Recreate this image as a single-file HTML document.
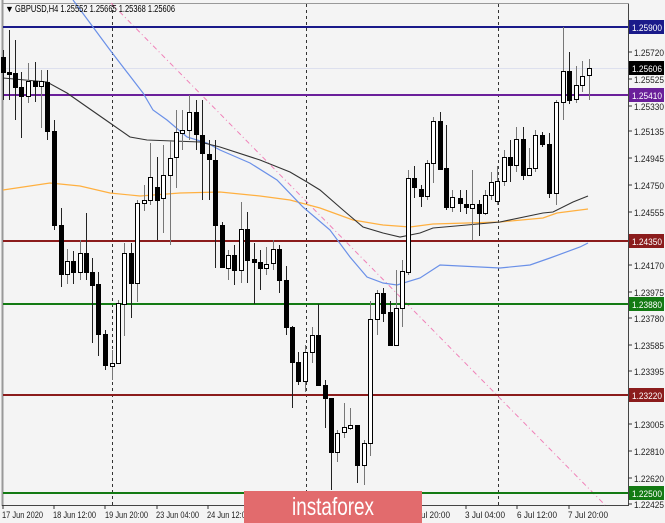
<!DOCTYPE html>
<html><head><meta charset="utf-8"><style>
html,body{margin:0;padding:0;background:#f4f4f4;}
svg{display:block;font-family:"Liberation Sans","DejaVu Sans",sans-serif;}
</style></head><body>
<svg id="s" width="665" height="523" viewBox="0 0 665 523" xmlns="http://www.w3.org/2000/svg">
<rect width="665" height="523" fill="#f4f4f4"/>
<line x1="2.5" y1="0" x2="2.5" y2="506" stroke="#999" stroke-width="2"/>
<line x1="628.5" y1="3" x2="628.5" y2="506" stroke="#444"/>
<line x1="2" y1="505.5" x2="629" y2="505.5" stroke="#444"/>
<line x1="2" y1="3.5" x2="629" y2="3.5" stroke="#999"/>
<g stroke="#333" stroke-dasharray="3,3">
<line x1="112.5" y1="4" x2="112.5" y2="505"/>
<line x1="306.5" y1="4" x2="306.5" y2="505"/>
<line x1="498.5" y1="4" x2="498.5" y2="505"/>
</g>
<line x1="3" y1="68.5" x2="628" y2="68.5" stroke="#dde0ee"/>
<line x1="111" y1="3" x2="605" y2="505" stroke="#f080b8" stroke-dasharray="5,3,1,3"/>
<line x1="3" y1="27" x2="628" y2="27" stroke="#1a1a8a" stroke-width="2"/>
<line x1="3" y1="95" x2="628" y2="95" stroke="#6a1f9a" stroke-width="2"/>
<line x1="3" y1="241" x2="628" y2="241" stroke="#8b1c1c" stroke-width="2"/>
<line x1="3" y1="304" x2="628" y2="304" stroke="#137a13" stroke-width="2"/>
<line x1="3" y1="395" x2="628" y2="395" stroke="#8b1c1c" stroke-width="2"/>
<line x1="3" y1="493" x2="628" y2="493" stroke="#137a13" stroke-width="2"/>
<polyline fill="none" stroke="#ffb040" stroke-width="1.2" points="3,190 50,183 80,186 110,193 140,196 180,193 220,192 260,196 290,200 320,208 353,220 383,225 410,227 433,224 467,223 500,222 543,218 557,213 588,209"/>
<polyline fill="none" stroke="#6a90e8" stroke-width="1.2" points="73,0 110,50 143,93 153,110 167,120 187,137 207,143 220,150 250,163 277,180 303,207 330,230 350,257 367,277 383,283 397,285 420,278 440,265 500,268 530,265 550,258 580,247 588,243"/>
<polyline fill="none" stroke="#333" stroke-width="1.1" points="3,78 47,82 67,93 87,107 110,123 130,137 147,140 173,141 200,142 220,147 260,160 290,172 307,182 320,190 343,210 363,227 383,233 400,237 420,233 433,228 467,225 500,222 543,213 553,212 573,202 588,196"/>
<g id="c"></g>
<text x="5" y="12" font-size="9" fill="#000">▼</text>
<text x="15" y="12" font-size="10" fill="#000" textLength="160" lengthAdjust="spacingAndGlyphs">GBPUSD,H4  1.25552 1.25665 1.25368 1.25606</text>
<g font-size="9" fill="#222">
<text x="634" y="56" textLength="30" lengthAdjust="spacingAndGlyphs">1.25720</text>
<text x="634" y="83" textLength="30" lengthAdjust="spacingAndGlyphs">1.25525</text>
<text x="634" y="110" textLength="30" lengthAdjust="spacingAndGlyphs">1.25330</text>
<text x="634" y="135" textLength="30" lengthAdjust="spacingAndGlyphs">1.25135</text>
<text x="634" y="162" textLength="30" lengthAdjust="spacingAndGlyphs">1.24945</text>
<text x="634" y="189" textLength="30" lengthAdjust="spacingAndGlyphs">1.24750</text>
<text x="634" y="216" textLength="30" lengthAdjust="spacingAndGlyphs">1.24555</text>
<text x="634" y="269" textLength="30" lengthAdjust="spacingAndGlyphs">1.24170</text>
<text x="634" y="296" textLength="30" lengthAdjust="spacingAndGlyphs">1.23975</text>
<text x="634" y="322" textLength="30" lengthAdjust="spacingAndGlyphs">1.23780</text>
<text x="634" y="349" textLength="30" lengthAdjust="spacingAndGlyphs">1.23585</text>
<text x="634" y="375" textLength="30" lengthAdjust="spacingAndGlyphs">1.23395</text>
<text x="634" y="428" textLength="30" lengthAdjust="spacingAndGlyphs">1.23005</text>
<text x="634" y="455" textLength="30" lengthAdjust="spacingAndGlyphs">1.22810</text>
<text x="634" y="482" textLength="30" lengthAdjust="spacingAndGlyphs">1.22620</text>
<text x="634" y="508" textLength="30" lengthAdjust="spacingAndGlyphs">1.22425</text>
</g>
<g stroke="#333">
<line x1="628" y1="52" x2="632" y2="52"/><line x1="628" y1="79" x2="632" y2="79"/><line x1="628" y1="106" x2="632" y2="106"/><line x1="628" y1="131" x2="632" y2="131"/><line x1="628" y1="158" x2="632" y2="158"/><line x1="628" y1="185" x2="632" y2="185"/><line x1="628" y1="212" x2="632" y2="212"/><line x1="628" y1="265" x2="632" y2="265"/><line x1="628" y1="292" x2="632" y2="292"/><line x1="628" y1="318" x2="632" y2="318"/><line x1="628" y1="345" x2="632" y2="345"/><line x1="628" y1="371" x2="632" y2="371"/><line x1="628" y1="424" x2="632" y2="424"/><line x1="628" y1="451" x2="632" y2="451"/><line x1="628" y1="478" x2="632" y2="478"/><line x1="628" y1="504" x2="632" y2="504"/>
</g>
<g font-size="9" fill="#fff">
<rect x="629" y="20" width="35" height="14" fill="#1a1a8a"/><text x="632" y="31" textLength="30" lengthAdjust="spacingAndGlyphs">1.25900</text>
<rect x="629" y="61" width="35" height="14" fill="#000"/><text x="632" y="72" textLength="30" lengthAdjust="spacingAndGlyphs">1.25606</text>
<rect x="629" y="88" width="35" height="14" fill="#6a1f9a"/><text x="632" y="99" textLength="30" lengthAdjust="spacingAndGlyphs">1.25410</text>
<rect x="629" y="234" width="35" height="14" fill="#8b1c1c"/><text x="632" y="245" textLength="30" lengthAdjust="spacingAndGlyphs">1.24350</text>
<rect x="629" y="297" width="35" height="14" fill="#137a13"/><text x="632" y="308" textLength="30" lengthAdjust="spacingAndGlyphs">1.23880</text>
<rect x="629" y="388" width="35" height="14" fill="#8b1c1c"/><text x="632" y="399" textLength="30" lengthAdjust="spacingAndGlyphs">1.23220</text>
<rect x="629" y="486" width="35" height="14" fill="#137a13"/><text x="632" y="497" textLength="30" lengthAdjust="spacingAndGlyphs">1.22500</text>
</g>
<g stroke="#333">
<line x1="3" y1="505" x2="3" y2="509"/><line x1="54" y1="505" x2="54" y2="509"/><line x1="105" y1="505" x2="105" y2="509"/><line x1="157" y1="505" x2="157" y2="509"/><line x1="208" y1="505" x2="208" y2="509"/><line x1="466" y1="505" x2="466" y2="509"/><line x1="517" y1="505" x2="517" y2="509"/><line x1="569" y1="505" x2="569" y2="509"/>
</g>
<g font-size="9" fill="#222">
<text x="2" y="518" textLength="41" lengthAdjust="spacingAndGlyphs">17 Jun 2020</text>
<text x="53" y="518" textLength="43" lengthAdjust="spacingAndGlyphs">18 Jun 12:00</text>
<text x="105" y="518" textLength="43" lengthAdjust="spacingAndGlyphs">19 Jun 20:00</text>
<text x="156" y="518" textLength="43" lengthAdjust="spacingAndGlyphs">23 Jun 04:00</text>
<text x="207" y="518" textLength="43" lengthAdjust="spacingAndGlyphs">24 Jun 12:00</text>
<text x="410" y="518" textLength="40" lengthAdjust="spacingAndGlyphs">2 Jul 20:00</text>
<text x="465" y="518" textLength="40" lengthAdjust="spacingAndGlyphs">3 Jul 04:00</text>
<text x="517" y="518" textLength="40" lengthAdjust="spacingAndGlyphs">6 Jul 12:00</text>
<text x="568" y="518" textLength="40" lengthAdjust="spacingAndGlyphs">7 Jul 20:00</text>
</g>
<rect x="244" y="491" width="178" height="32" fill="#e26b6d"/>
<text x="333" y="515" font-size="25" fill="#fff" text-anchor="middle" textLength="82" lengthAdjust="spacingAndGlyphs">instaforex</text>
</svg>
<script>
var d=[
[3,57,72,50,100,1],[9,72,74,30,100,1],[15,73,87,40,120,1],[21,87,96,72,138,1],[28,81,96,63,103,0],[35,81,86,62,102,1],[41,81,86,70,128,0],[47,82,131,70,140,1],
[54,131,225,120,230,1],[61,225,274,208,287,1],[67,261,274,249,284,0],[73,261,272,251,284,1],[80,253,272,240,280,0],[86,253,272,213,280,1],[92,272,285,258,343,1],[98,284,334,272,356,1],[105,334,365,330,370,1],[112,363,366,350,380,0],[118,303,363,300,340,0],[124,253,304,243,336,0],[131,253,283,243,318,1],[137,203,283,200,302,0],[144,200,203,185,211,0],[150,177,200,143,205,0],[157,187,200,157,240,1],[163,175,198,145,233,0],[170,158,175,140,245,0],[176,132,157,110,188,0],[182,130,133,110,150,0],[189,112,130,95,140,0],[196,112,134,100,150,1],[202,135,153,100,200,1],[209,154,159,140,200,1],[215,160,225,140,268,1],
[222,225,267,222,268,1],[228,255,268,250,280,0],[234,255,270,245,285,1],[241,229,270,202,283,0],[247,229,260,212,283,1],[254,259,262,243,304,1],[260,262,268,250,290,1],[266,264,268,247,275,0],[273,249,263,240,270,0],[279,249,280,245,293,1],[286,280,327,266,335,1],[292,327,362,326,408,1],[298,362,381,352,385,1],[305,352,381,345,392,0],[312,335,352,327,363,0],[318,335,385,304,385,1],[325,385,398,380,428,1],[331,398,452,398,490,1],[337,433,452,430,462,0],[344,427,432,403,438,0],[350,425,428,408,430,0],[357,425,465,425,483,1],[364,443,465,440,485,0],[370,319,443,301,456,0],[377,293,319,290,335,0],[383,293,313,288,322,1],[390,312,345,301,345,1],[396,308,345,270,327,0],[402,271,308,260,327,0],
[408,178,272,170,275,0],[414,178,187,166,198,1],[421,189,196,185,207,1],[427,163,196,160,200,0],[433,121,163,117,183,0],[440,121,169,112,170,1],[446,168,207,125,210,1],[452,197,207,190,212,0],[460,198,203,190,212,1],[466,204,207,190,214,1],[472,204,208,170,240,0],[479,204,213,200,236,1],[485,195,213,190,215,0],[491,182,195,172,200,0],[497,181,201,166,205,0],[504,157,181,150,186,0],[510,157,165,140,182,1],[516,139,165,127,172,0],[523,139,175,127,180,1],[529,168,175,148,176,0],[535,135,168,130,172,0],[542,135,144,132,147,1],[549,144,193,133,198,1],[556,102,193,100,205,0],[563,71,102,27,120,0],[569,71,100,52,104,1],[576,85,99,66,103,0],[582,76,85,61,92,0],[589,68,75,59,100,0]
];
var g=document.getElementById('c'),h='';
d.forEach(function(c){var x=c[0];
h+='<line x1="'+(x+.5)+'" y1="'+c[3]+'" x2="'+(x+.5)+'" y2="'+c[4]+'" stroke="'+(c[5]?'#222':'#777')+'"/>';
var t=c[1],b=Math.max(c[2],c[1]+2);
h+='<rect x="'+(x-1.5)+'" y="'+(t+.5)+'" width="4" height="'+(b-t)+'" fill="'+(c[5]?'#000':'#fff')+'" stroke="#000" stroke-width="1"/>';});
g.innerHTML=h;
</script>
</body></html>
